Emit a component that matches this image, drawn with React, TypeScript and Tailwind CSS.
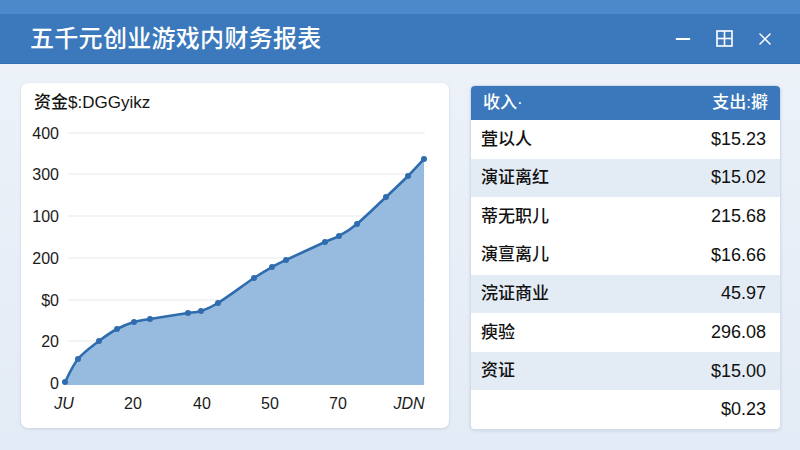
import { Minus, X } from "lucide-react";

const FONT = "font-['Liberation_Sans','Noto_Sans_CJK_SC',sans-serif]";

// page-space points of the balance curve
const POINTS: [number, number][] = [
  [65, 382], [78, 359], [99, 341], [117, 329], [134, 322], [150, 319],
  [188, 313], [201, 311], [218, 303], [254, 278], [272, 267], [286, 260],
  [325, 242], [339, 236], [357, 224], [386, 197], [408, 176], [424, 159],
];

const Y_TICKS = [
  { label: "400", y: 133 },
  { label: "300", y: 174 },
  { label: "100", y: 216 },
  { label: "200", y: 258 },
  { label: "$0", y: 300 },
  { label: "20", y: 341 },
  { label: "0", y: 383 },
];

const X_TICKS = [
  { label: "JU", x: 64, italic: true },
  { label: "20", x: 133 },
  { label: "40", x: 202 },
  { label: "50", x: 270 },
  { label: "70", x: 338 },
  { label: "JDN", x: 409, italic: true },
];

const ROWS = [
  { name: "萓以人", value: "$15.23", alt: false },
  { name: "演证离红", value: "$15.02", alt: true },
  { name: "蒂无职儿", value: "215.68", alt: false },
  { name: "演亶离儿", value: "$16.66", alt: false },
  { name: "浣证商业", value: "45.97", alt: true },
  { name: "瘐验", value: "296.08", alt: false },
  { name: "资证", value: "$15.00", alt: true },
  { name: "", value: "$0.23", alt: false },
];

function smoothPath(pts: [number, number][]) {
  let d = `M${pts[0][0]},${pts[0][1]}`;
  for (let i = 0; i < pts.length - 1; i++) {
    const p0 = pts[i - 1] ?? pts[i];
    const p1 = pts[i];
    const p2 = pts[i + 1];
    const p3 = pts[i + 2] ?? p2;
    const c1x = p1[0] + (p2[0] - p0[0]) / 6;
    const c1y = p1[1] + (p2[1] - p0[1]) / 6;
    const c2x = p2[0] - (p3[0] - p1[0]) / 6;
    const c2y = p2[1] - (p3[1] - p1[1]) / 6;
    d += ` C${c1x},${c1y} ${c2x},${c2y} ${p2[0]},${p2[1]}`;
  }
  return d;
}

function GridIcon() {
  return (
    <svg width="17" height="17" viewBox="0 0 17 17" fill="none" stroke="white" strokeWidth="1.6">
      <rect x="1" y="1" width="15" height="15" />
      <line x1="8.5" y1="1" x2="8.5" y2="16" />
      <line x1="1" y1="8.5" x2="16" y2="8.5" />
    </svg>
  );
}

function BalanceChart() {
  const line = smoothPath(POINTS);
  const last = POINTS[POINTS.length - 1];
  const area = `${line} L${last[0]},385 L${POINTS[0][0]},385 Z`;

  return (
    <svg width="428" height="315" viewBox="21 113 428 315" className="block">
      {Y_TICKS.map((t) => (
        <g key={t.label}>
          <line x1="68" y1={t.y} x2="425" y2={t.y} stroke="#e6e9ee" strokeWidth="1.2" />
          <text
            x="59"
            y={t.y + 6}
            textAnchor="end"
            fontSize="16"
            fill="#1b1b1b"
            fontFamily="Liberation Sans, sans-serif"
          >
            {t.label}
          </text>
        </g>
      ))}
      <path d={area} fill="#97bbde" />
      <path d={line} fill="none" stroke="#2f6cae" strokeWidth="2.6" strokeLinejoin="round" />
      {POINTS.map(([x, y]) => (
        <circle key={x} cx={x} cy={y} r="3" fill="#2f6cae" />
      ))}
      {X_TICKS.map((t) => (
        <text
          key={t.label}
          x={t.x}
          y="409"
          textAnchor="middle"
          fontSize="16"
          fontStyle={t.italic ? "italic" : "normal"}
          fill="#1b1b1b"
          fontFamily="Liberation Sans, sans-serif"
        >
          {t.label}
        </text>
      ))}
    </svg>
  );
}

export default function App() {
  return (
    <div className={`${FONT} w-[800px] h-[450px] overflow-hidden flex flex-col bg-[#e7eef7]`}>
      {/* window chrome */}
      <div className="h-[14px] bg-[#4b89ca]" />
      <div className="h-[50px] bg-[#3c79bc] border-b border-[#3470b1] flex items-center pl-[30px] pr-[25px]">
        <h1 className="text-[24px] leading-none font-medium text-white tracking-[0.3px]">五千元创业游戏内财务报表</h1>
        <div className="ml-auto flex items-center gap-[22px] text-white">
          <Minus size={22} strokeWidth={2} />
          <GridIcon />
          <X size={20} strokeWidth={1.8} />
        </div>
      </div>

      <div className="flex-1 flex items-start gap-[21px] pl-[21px] pt-[19px] bg-gradient-to-b from-[#edf2f9] to-[#e3ebf6]">
        {/* balance chart card */}
        <div className="w-[428px] h-[345px] bg-white rounded-[7px] shadow-[0_1px_3px_rgba(60,90,130,0.18)]">
          <div className="pt-[10px] pl-[13px] h-[30px] text-[17px] leading-[20px] font-medium text-[#141414]">
            资金$:DGGyikz
          </div>
          <BalanceChart />
        </div>

        {/* income / expense table */}
        <div className="mt-[2px] w-[311px] h-[345px] bg-white rounded-[5px] overflow-hidden flex flex-col border border-[#d3dce8] shadow-[0_1px_3px_rgba(60,90,130,0.15)]">
          <div className="h-[34px] shrink-0 bg-[#3a78bb] flex items-center justify-between pl-[12px] pr-[12px] text-white text-[17px] font-medium">
            <span>收入·</span>
            <span>支出:擗</span>
          </div>
          {ROWS.map((r) => (
            <div
              key={r.value}
              className={`flex-1 flex items-center justify-between pl-[10px] pr-[14px] text-[#111] font-medium ${
                r.alt ? "bg-[#e3ebf5]" : "bg-white"
              }`}
            >
              <span className="text-[17px]">{r.name}</span>
              <span className="text-[18px]">{r.value}</span>
            </div>
          ))}
        </div>
      </div>
    </div>
  );
}
